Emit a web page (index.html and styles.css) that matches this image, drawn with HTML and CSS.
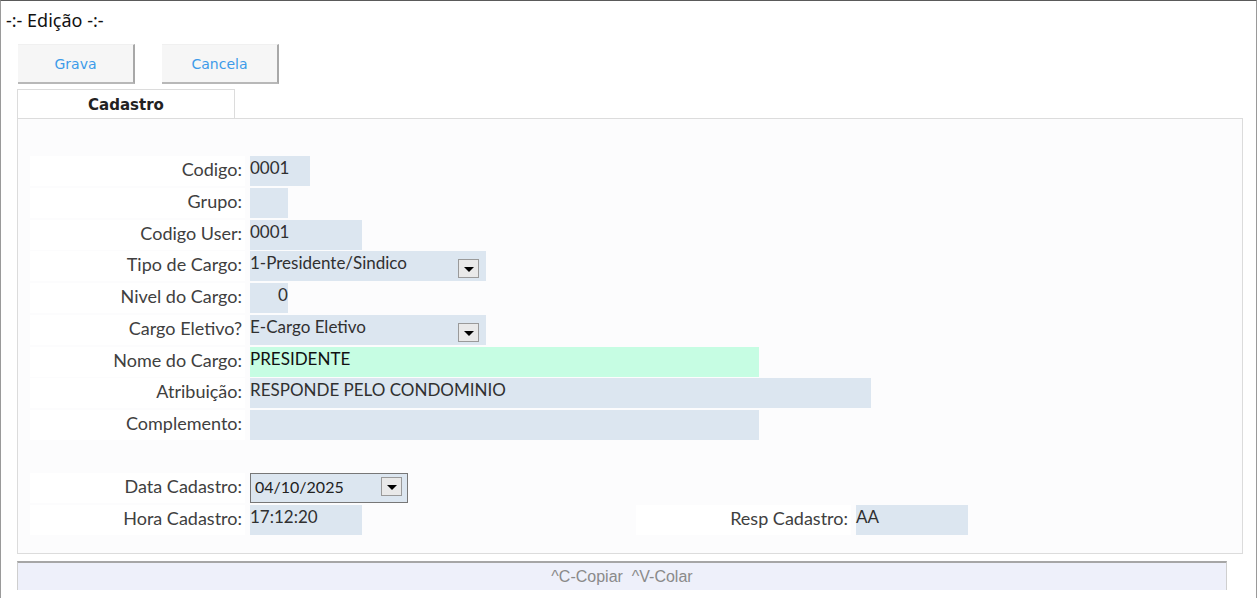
FILE: index.html
```html
<!DOCTYPE html>
<html>
<head>
<meta charset="utf-8">
<link rel="stylesheet" href="styles.css">
</head>
<body>
<div class="window">
  <div class="title">-:- Edição -:-</div>
  <div class="buttons">
    <div class="btn">Grava</div>
    <div class="btn">Cancela</div>
  </div>
  <div class="tabs"><div class="tab">Cadastro</div></div>
  <div class="panel">
    <div class="rows">
      <div class="row"><div class="label">Codigo:</div><div class="field w60">0001</div></div>
      <div class="row"><div class="label">Grupo:</div><div class="field w38"></div></div>
      <div class="row"><div class="label">Codigo User:</div><div class="field w112">0001</div></div>
      <div class="row"><div class="label">Tipo de Cargo:</div><div class="field w236 combo">1-Presidente/Sindico<span class="dd"><span class="tri"></span></span></div></div>
      <div class="row"><div class="label">Nivel do Cargo:</div><div class="field w38 num">0</div></div>
      <div class="row"><div class="label">Cargo Eletivo?</div><div class="field w236 combo">E-Cargo Eletivo<span class="dd"><span class="tri"></span></span></div></div>
      <div class="row"><div class="label">Nome do Cargo:</div><div class="field w509 mint">PRESIDENTE</div></div>
      <div class="row"><div class="label">Atribuição:</div><div class="field w621">RESPONDE PELO CONDOMINIO</div></div>
      <div class="row"><div class="label">Complemento:</div><div class="field w509"></div></div>
    </div>
    <div class="rows second">
      <div class="row"><div class="label">Data Cadastro:</div><div class="field w158 date">04/10/2025<span class="dd dd2"><span class="tri"></span></span></div></div>
      <div class="row">
        <div class="label">Hora Cadastro:</div><div class="field w112">17:12:20</div>
        <div class="label resp">Resp Cadastro:</div><div class="field w112">AA</div>
      </div>
    </div>
  </div>
  <div class="status">^C-Copiar&nbsp;&nbsp;^V-Colar</div>
</div>
</body>
</html>
```
FILE: styles.css
```css
html, body {
  margin: 0;
  padding: 0;
  background: #ffffff;
}
.window {
  width: 1255px;
  height: 597px;
  border-top: 1px solid #5a5a5a;
  border-left: 1px solid #9a9a9a;
  border-right: 1px solid #9a9a9a;
  background: #ffffff;
  overflow: hidden;
}
.title {
  font-family: "Noto Sans", sans-serif;
  font-size: 18px;
  color: #111;
  height: 43px;
  line-height: 38px;
  padding-left: 5px;
}
.buttons {
  display: flex;
  gap: 27px;
  padding-left: 17px;
}
.btn {
  width: 117px;
  height: 40px;
  background: #f6f6f6;
  border-right: 2px solid #a8a8a8;
  border-bottom: 2px solid #b8b8b8;
  border-top: 1px solid #f0f0f0;
  box-sizing: border-box;
  display: flex;
  align-items: center;
  justify-content: center;
  font-family: "DejaVu Sans", sans-serif;
  font-size: 14px;
  color: #3d9be9;
}
.tabs {
  margin-top: 5px;
  padding-left: 16px;
  display: flex;
}
.tab {
  width: 218px;
  height: 29px;
  box-sizing: border-box;
  border: 1px solid #dcdcdc;
  border-bottom: none;
  background: #ffffff;
  font-family: "DejaVu Sans", sans-serif;
  font-weight: bold;
  font-size: 15px;
  color: #222;
  display: flex;
  align-items: center;
  justify-content: center;
  padding-top: 2px;
}
.panel {
  margin-left: 16px;
  width: 1226px;
  height: 436px;
  box-sizing: border-box;
  border: 1px solid #dcdcdc;
  background: #fcfcfd;
  padding-top: 37px;
  padding-left: 12px;
}
.rows {
  display: flex;
  flex-direction: column;
  gap: 1.75px;
}
.rows.second {
  margin-top: 33px;
  gap: 2px;
}
.row {
  display: flex;
  height: 30px;
}
.label {
  width: 215px;
  height: 30px;
  box-sizing: border-box;
  background: #ffffff;
  text-align: right;
  padding-right: 3px;
  padding-top: 2px;
  font-family: "Lato", sans-serif;
  font-size: 18px;
  color: #404040;
  margin-right: 5px;
  white-space: nowrap;
}
.label.resp {
  margin-left: 274px;
  width: 215px;
}
.field {
  height: 30px;
  box-sizing: border-box;
  background: #dce6f0;
  font-family: "Lato", sans-serif;
  font-size: 17px;
  color: #303030;
  padding: 1px 0 0;
  position: relative;
  white-space: nowrap;
}
.field.mint {
  background: #c6fde3;
  color: #111;
}
.field.num {
  padding-left: 28px;
}
.w38 { width: 38px; }
.w60 { width: 60px; }
.w112 { width: 112px; }
.w158 { width: 158px; }
.w236 { width: 236px; }
.w509 { width: 509px; }
.w621 { width: 621px; }
.field.date {
  border: 1px solid #777;
  padding: 3px 4px 0;
  font-size: 16px;
  color: #222;
}
.dd {
  position: absolute;
  right: 7px;
  top: 8px;
  width: 21px;
  height: 19px;
  box-sizing: border-box;
  border: 1px solid #9a9a9a;
  background: #e9e9e9;
  display: flex;
  align-items: center;
  justify-content: center;
}
.dd.dd2 {
  right: 5px;
  top: 3px;
}
.tri {
  width: 0;
  height: 0;
  border-left: 5px solid transparent;
  border-right: 5px solid transparent;
  border-top: 5px solid #000;
  margin-top: 2px;
}
.status {
  margin-top: 7px;
  margin-left: 16px;
  width: 1210px;
  height: 29px;
  box-sizing: border-box;
  background: #eef0fa;
  border-top: 2px solid #a6a6a6;
  border-left: 1px solid #cfcfcf;
  border-right: 1px solid #cfcfcf;
  text-align: center;
  font-family: "Liberation Sans", sans-serif;
  font-size: 16px;
  color: #8a8a8a;
  line-height: 27px;
}
```
